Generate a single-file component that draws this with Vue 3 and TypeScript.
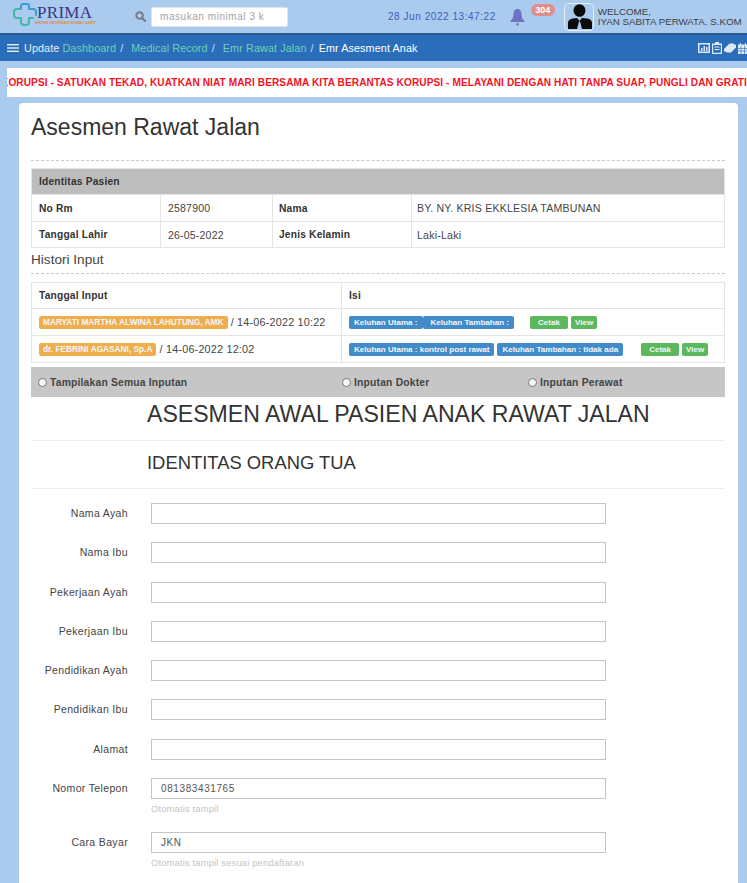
<template>
  <div class="page">
    <header class="topbar">
      <div class="logo">
        <svg class="logo-mark" width="26" height="26" viewBox="0 0 26 26" fill="none">
          <path d="M9 8 V5 Q9 3 11 3 H15 Q17 3 17 5 V8 H21 Q24 8 24 11 V14" stroke="#3a9fd0" stroke-width="2" stroke-linecap="round" />
          <path d="M9 8 H5 Q2 8 2 11 V14 Q2 17 5 17 H9 V21 Q9 24 12 24 H14 Q17 24 17 21 V17 H21" stroke="#45b5a8" stroke-width="2" stroke-linecap="round" />
        </svg>
        <div class="logo-text">
          <span class="logo-name">PRIMA</span>
          <span class="logo-sub">SISTEM INFORMASI RUMAH SAKIT</span>
        </div>
      </div>
      <svg class="search-icon" width="11" height="11" viewBox="0 0 12 12" fill="none">
        <circle cx="5" cy="5" r="3.6" stroke="#6f7a86" stroke-width="2" />
        <path d="M8 8 L11 11" stroke="#6f7a86" stroke-width="2.2" stroke-linecap="round" />
      </svg>
      <div class="search">masukan minimal 3 k</div>
      <div class="clock">28 Jun 2022 13:47:22</div>
      <div class="bell">
        <svg width="15" height="18" viewBox="0 0 15 18">
          <path d="M7.5 1 C10.5 1 11.5 3.5 11.5 6.5 C11.5 10 13 11.5 14.5 13 V14 H0.5 V13 C2 11.5 3.5 10 3.5 6.5 C3.5 3.5 4.5 1 7.5 1 Z" fill="#6c72c4" />
          <circle cx="7.5" cy="16.2" r="1.2" fill="#6c72c4" />
        </svg>
        <span class="count">304</span>
      </div>
      <div class="avatar">
        <svg width="24" height="25" viewBox="0 0 24 25">
          <ellipse cx="11.5" cy="6.5" rx="6" ry="6.3" fill="#0b0b0b" />
          <path d="M0 25 V19 Q0 15 5 14.5 L9 14 L11.5 17 L14 14 L19 14.5 Q24 15 24 19 V25 H14 L12 17.5 H11 L9 25 Z" fill="#0b0b0b" />
        </svg>
      </div>
      <div class="welcome">
        <span>WELCOME,</span>
        <span>IYAN SABITA PERWATA. S.KOM</span>
      </div>
    </header>

    <nav class="navbar">
      <svg width="12" height="8" viewBox="0 0 12 8" fill="#e8eef6">
        <rect width="12" height="1.4" />
        <rect y="3.3" width="12" height="1.4" />
        <rect y="6.6" width="12" height="1.4" />
      </svg>
      <span class="nav-title">Update</span>
      <span v-for="c in crumbs" :key="c" class="crumb">{{ c }}<i>/</i></span>
      <span class="nav-current">Emr Asesment Anak</span>
      <div class="nav-icons">
        <svg width="12" height="10" viewBox="0 0 12 10" fill="#dfe9f5">
          <path d="M0 0 H12 V10 H0 Z M1.5 1.5 V8.5 H10.5 V1.5 Z" />
          <path d="M3 8 V5 H4.5 V8 Z M5.5 8 V3 H7 V8 Z M8 8 V4 H9.5 V8 Z" />
        </svg>
        <svg width="10" height="12" viewBox="0 0 10 12" fill="#dfe9f5">
          <path d="M3 0 H7 V1.5 H10 V12 H0 V1.5 H3 Z M1.2 3 V10.8 H8.8 V3 Z" />
          <path d="M2.5 4.5 H7.5 V5.5 H2.5 Z M2.5 7 H7.5 V8 H2.5 Z" />
        </svg>
        <svg width="12" height="10" viewBox="0 0 12 10" fill="#dfe9f5">
          <path d="M0 6 L5 1 Q7 0 9 0.5 L12 2 V4.5 L7 9.5 H3 L0 8 Z" />
        </svg>
        <svg width="10" height="11" viewBox="0 0 10 11" fill="#dfe9f5">
          <path d="M0 1.5 H10 V11 H0 Z M2 0 H3 V2 H2 Z M7 0 H8 V2 H7 Z" />
          <path d="M3 3 V11 M6.5 3 V11 M0 5.5 H10 M0 8 H10" stroke="#2a6ebb" stroke-width="0.6" />
        </svg>
      </div>
    </nav>

    <div class="ticker">
      <span>KORUPSI - SATUKAN TEKAD, KUATKAN NIAT MARI BERSAMA KITA BERANTAS KORUPSI - MELAYANI DENGAN HATI TANPA SUAP, PUNGLI DAN GRATIFIKASI</span>
    </div>

    <main class="card">
      <h1>Asesmen Rawat Jalan</h1>
      <div class="dash first"></div>

      <table class="tbl identitas">
        <colgroup>
          <col style="width: 129px" />
          <col style="width: 112px" />
          <col style="width: 139px" />
          <col />
        </colgroup>
        <tbody>
          <tr class="head"><th colspan="4">Identitas Pasien</th></tr>
          <tr>
            <th>No Rm</th>
            <td>2587900</td>
            <th class="label-mid">Nama</th>
            <td class="value-end">BY. NY. KRIS EKKLESIA TAMBUNAN</td>
          </tr>
          <tr class="last">
            <th>Tanggal Lahir</th>
            <td>26-05-2022</td>
            <th class="label-mid">Jenis Kelamin</th>
            <td class="value-end">Laki-Laki</td>
          </tr>
        </tbody>
      </table>

      <h2 class="histori">Histori Input</h2>
      <div class="dash"></div>

      <table class="tbl history">
        <colgroup>
          <col style="width: 310px" />
          <col />
        </colgroup>
        <tbody>
          <tr class="head-plain">
            <th>Tanggal Input</th>
            <th>Isi</th>
          </tr>
          <tr v-for="row in history" :key="row.date">
            <td class="when"><span class="tag orange">{{ row.by }}</span> / {{ row.date }}</td>
            <td class="what">
              <span class="tag blue">{{ row.utama }}</span>
              <span class="tag blue" :class="{ joined: row.joined }">{{ row.tambahan }}</span>
              <span class="tag green cetak" :style="{ marginLeft: row.gap + 'px' }">Cetak</span>
              <span class="tag green view">View</span>
            </td>
          </tr>
        </tbody>
      </table>

      <div class="filter">
        <label v-for="f in filters" :key="f.text" :style="{ width: f.width + 'px' }">
          <span class="radio"></span>{{ f.text }}
        </label>
      </div>

      <h2 class="form-title">ASESMEN AWAL PASIEN ANAK RAWAT JALAN</h2>
      <h3 class="form-sub">IDENTITAS ORANG TUA</h3>

      <form class="form" @submit.prevent>
        <div v-for="f in fields" :key="f.label" class="field">
          <label>{{ f.label }}</label>
          <div class="control">
            <input type="text" :value="f.value" />
            <small v-if="f.hint">{{ f.hint }}</small>
          </div>
        </div>
      </form>
    </main>
  </div>
</template>

<script setup lang="ts">
interface HistoryRow {
  by: string
  date: string
  utama: string
  tambahan: string
  joined: boolean
  gap: number
}

interface Field {
  label: string
  value?: string
  hint?: string
}

const crumbs = ['Dashboard', 'Medical Record', 'Emr Rawat Jalan']

const history: HistoryRow[] = [
  {
    by: 'MARYATI MARTHA ALWINA LAHUTUNG, AMK',
    date: '14-06-2022 10:22',
    utama: 'Keluhan Utama :',
    tambahan: 'Keluhan Tambahan :',
    joined: true,
    gap: 13
  },
  {
    by: 'dr. FEBRINI AGASANI, Sp.A',
    date: '14-06-2022 12:02',
    utama: 'Keluhan Utama : kontrol post rawat',
    tambahan: 'Keluhan Tambahan : tidak ada',
    joined: false,
    gap: 15
  }
]

const filters = [
  { text: 'Tampilakan Semua Inputan', width: 304 },
  { text: 'Inputan Dokter', width: 186 },
  { text: 'Inputan Perawat', width: 120 }
]

const fields: Field[] = [
  { label: 'Nama Ayah' },
  { label: 'Nama Ibu' },
  { label: 'Pekerjaan Ayah' },
  { label: 'Pekerjaan Ibu' },
  { label: 'Pendidikan Ayah' },
  { label: 'Pendidikan Ibu' },
  { label: 'Alamat' },
  { label: 'Nomor Telepon', value: '081383431765', hint: 'Otomatis tampil' },
  { label: 'Cara Bayar', value: 'JKN', hint: 'Otomatis tampil sesuai pendaftaran' }
]
</script>

<style>
html,
body {
  background: #abcbee;
}
</style>

<style scoped>
.page {
  height: 883px;
  overflow: hidden;
  background: #abcbee;
  font-family: "Liberation Sans", Arial, sans-serif;
  font-size: 10px;
  color: #333;
}

.topbar {
  display: flex;
  align-items: center;
  height: 33px;
  border-bottom: 2px solid #2b5a8f;
}

.logo {
  display: flex;
  align-items: center;
  width: 135px;
  padding-left: 12px;
  box-sizing: border-box;
}

.logo-mark {
  flex: none;
  margin: -6px -1px 0 0;
}

.logo-text {
  display: flex;
  flex-direction: column;
  margin-top: -4px;
}

.logo-name {
  font-family: "Liberation Serif", serif;
  font-size: 17px;
  line-height: 17px;
  letter-spacing: 0.3px;
  color: #3a3585;
}

.logo-sub {
  margin-left: -2px;
  font-size: 3.6px;
  line-height: 5px;
  font-weight: bold;
  white-space: nowrap;
  color: #e08a3c;
}

.search-icon {
  flex: none;
}

.search {
  width: 137px;
  height: 20px;
  margin-left: 5px;
  padding-left: 8px;
  box-sizing: border-box;
  overflow: hidden;
  white-space: nowrap;
  line-height: 18px;
  letter-spacing: 0.55px;
  color: #a3a3a3;
  background: #fff;
  border: 1px solid #dde3ea;
  border-radius: 2px;
}

.clock {
  margin-left: 100px;
  letter-spacing: 0.55px;
  color: #3f5cc0;
  white-space: nowrap;
}

.bell {
  position: relative;
  width: 15px;
  height: 18px;
  margin-left: 14px;
}

.count {
  position: absolute;
  top: -4px;
  left: 21px;
  width: 24px;
  height: 12px;
  font-size: 9px;
  font-weight: bold;
  line-height: 12px;
  text-align: center;
  color: #fff;
  background: #df8d8d;
  border-radius: 6px;
}

.avatar {
  display: flex;
  align-items: flex-end;
  justify-content: flex-end;
  width: 30px;
  height: 28px;
  margin-left: 39px;
  padding: 0 1px 1px 0;
  box-sizing: border-box;
  flex: none;
  background: #abcbee;
  border: 1px solid #e8f0f8;
  border-radius: 5px;
}

.welcome {
  display: flex;
  flex-direction: column;
  margin-left: 4px;
  line-height: 10px;
  white-space: nowrap;
  font-size: 9.75px;
  color: #3a3f45;
}

.navbar {
  display: flex;
  align-items: center;
  height: 26px;
  padding-left: 7px;
  background: #2a6ebb;
  white-space: nowrap;
  font-size: 10.8px;
  letter-spacing: 0.1px;
}

.nav-title {
  margin-left: 5px;
  color: #e8eef6;
}

.crumb {
  margin-left: 3px;
  color: #6fd0b0;
}

.crumb + .crumb {
  margin-left: 8px;
}

.crumb i {
  margin-left: 4px;
  font-style: normal;
  color: #cddcf0;
}

.nav-current {
  margin-left: 5px;
  color: #fff;
}

.nav-icons {
  display: flex;
  align-items: center;
  gap: 2px;
  margin-left: auto;
  margin-right: -1px;
}

.ticker {
  height: 29px;
  margin: 7px 0 6px 7px;
  overflow: hidden;
  white-space: nowrap;
  line-height: 29px;
  font-size: 10.1px;
  font-weight: bold;
  letter-spacing: 0.09px;
  color: #f5131f;
  background: #fff;
}

.ticker span {
  display: inline-block;
  margin-left: -6px;
}

.card {
  width: 719px;
  height: 780px;
  margin-left: 19px;
  padding: 0 13px 0 12px;
  box-sizing: border-box;
  background: #fff;
  border-radius: 4px 4px 0 0;
}

h1 {
  margin: 0;
  padding-top: 10px;
  font-size: 23px;
  font-weight: normal;
  line-height: 28px;
  color: #333;
}

.dash {
  border-top: 1px dashed #c8c8c8;
  margin-bottom: 8px;
}

.dash.first {
  margin-top: 19px;
  margin-bottom: 7px;
}

.tbl {
  width: 100%;
  border-collapse: collapse;
  table-layout: fixed;
}

.tbl th,
.tbl td {
  height: 27px;
  padding: 0 7px;
  text-align: left;
  border: 1px solid #e4e4e4;
  box-sizing: border-box;
  white-space: nowrap;
}

.tbl th {
  font-size: 10.2px;
  font-weight: bold;
  letter-spacing: 0.2px;
}

.tbl td {
  font-size: 10.5px;
  letter-spacing: 0.2px;
  color: #444;
}

.tbl .head th {
  height: 26px;
  background: #bdbdbd;
}

.tbl .last th,
.tbl .last td {
  height: 26px;
}

.tbl .label-mid {
  padding-left: 6px;
}

.tbl .value-end {
  padding-left: 5px;
  font-size: 10.6px;
}

.tbl .head-plain th {
  height: 26px;
}

.histori {
  margin: 0;
  padding: 3px 0 5px;
  font-size: 13.6px;
  font-weight: normal;
  line-height: 17px;
  color: #444;
}

.history {
  margin-bottom: 4px;
}

.tag {
  display: inline-block;
  padding: 0 4px;
  line-height: 13px;
  border-radius: 2px;
  font-size: 8.05px;
  font-weight: bold;
  letter-spacing: 0;
  color: #f2f6fa;
  vertical-align: 1px;
}

.orange {
  background: #f0ad4e;
  font-size: 8.3px;
}

.blue {
  margin-right: 3px;
  padding: 0 5px;
  background: #428bca;
}

.joined {
  margin-left: -3px;
  padding-left: 8px;
}

.green {
  padding: 0 4px;
  background: #5cb85c;
}

.cetak {
  margin-right: 3px;
  padding: 0 8px;
}

.tbl .when {
  font-size: 10.8px;
}

.tbl .what {
  padding-right: 0;
}

.filter {
  display: flex;
  align-items: center;
  height: 30px;
  padding-left: 7px;
  background: #c6c6c6;
  font-size: 10.3px;
  font-weight: bold;
  letter-spacing: 0.2px;
  color: #444;
  white-space: nowrap;
}

.filter label {
  display: flex;
  align-items: center;
}

.radio {
  width: 7px;
  height: 7px;
  margin-right: 3px;
  background: #f6f6f6;
  border: 1px solid #777;
  border-radius: 50%;
}

.form-title {
  margin: 0;
  padding: 2px 0 11px 116px;
  font-size: 23.1px;
  font-weight: normal;
  line-height: 30px;
  border-bottom: 1px solid #eee;
  color: #333;
}

.form-sub {
  margin: 0;
  padding: 11px 0 14px 116px;
  font-size: 18.4px;
  font-weight: normal;
  line-height: 22px;
  border-bottom: 1px solid #eee;
  color: #333;
}

.form {
  display: flex;
  flex-direction: column;
  gap: 18.3px;
  padding-top: 14px;
}

.field {
  display: flex;
  align-items: flex-start;
}

.field label {
  width: 97px;
  flex: none;
  padding-top: 4px;
  text-align: right;
  font-size: 10.5px;
  letter-spacing: 0.35px;
  color: #444;
}

.control {
  display: flex;
  flex-direction: column;
  margin-left: 23px;
}

.control input {
  width: 455px;
  height: 21px;
  padding: 0 9px;
  box-sizing: border-box;
  font-family: inherit;
  font-size: 10px;
  letter-spacing: 0.6px;
  color: #555;
  background: #fff;
  border: 1px solid #c4c4c4;
  outline: none;
}

.control small {
  margin-top: 5px;
  margin-bottom: 0;
  font-size: 9.3px;
  line-height: 10px;
  letter-spacing: 0.2px;
  color: #c4c4c4;
}
</style>
